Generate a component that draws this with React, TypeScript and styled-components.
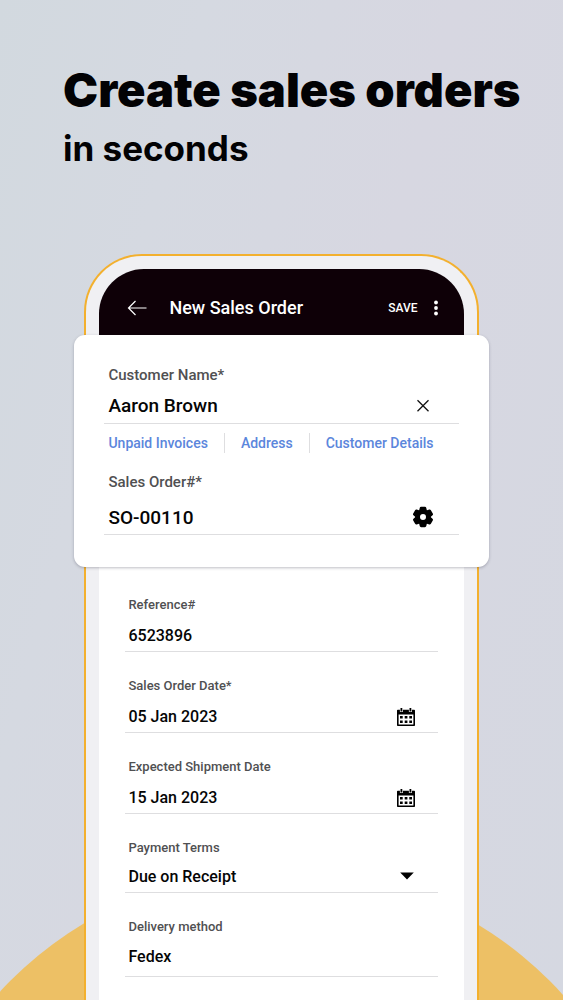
import React from "react";
import styled, { createGlobalStyle } from "styled-components";

const GlobalStyle = createGlobalStyle`
  *, *::before, *::after { box-sizing: border-box; }
  body {
    margin: 0;
    font-family: Roboto, "Liberation Sans", sans-serif;
    color: #050505;
  }
  button, input, select { font: inherit; color: inherit; }
`;

const Page = styled.main`
  position: relative;
  isolation: isolate;
  display: flex;
  flex-direction: column;
  min-height: 100vh;
  overflow: hidden;
  background: linear-gradient(105deg, #d2d9df 0%, #d5d9e1 25%, #d7d7e1 55%, #d5d8e1 100%);
`;

const Sun = styled.div`
  position: absolute;
  z-index: -1;
  top: 869px;
  left: 50%;
  width: 762px;
  height: 762px;
  margin-left: -383px;
  border-radius: 50%;
  background: #edc065;
`;

const Hero = styled.header`
  padding: 62px 0 0 63px;
  font-family: Inter, "Liberation Sans", sans-serif;
  color: #020204;
  white-space: nowrap;
`;

const Title = styled.h1`
  margin: 0;
  font-size: 47px;
  line-height: 56px;
  font-weight: 900;
`;

const Subtitle = styled.p`
  margin: 0;
  padding-top: 6px;
  font-size: 35px;
  line-height: 48px;
  font-weight: 700;
`;

const Phone = styled.section`
  flex: 1;
  display: flex;
  flex-direction: column;
  margin: 82px 15% 0;
  padding: 13px 13px 0;
  border: 2px solid #f3b02e;
  border-bottom: 0;
  border-radius: 58px 58px 0 0;
  background: #f0f0f3;
`;

const AppBar = styled.header`
  display: flex;
  align-items: center;
  height: 66px;
  padding: 12px 25px 0 28px;
  border-radius: 45px 45px 0 0;
  background: #0e0007;
  color: #fff;
`;

const AppTitle = styled.h2`
  flex: 1;
  margin: 0 0 0 22px;
  font-size: 18px;
  line-height: 24px;
  font-weight: 500;
  white-space: nowrap;
`;

const IconButton = styled.button`
  display: flex;
  flex: none;
  padding: 0;
  border: 0;
  background: none;
  cursor: pointer;
`;

const SaveButton = styled(IconButton)`
  margin-right: 15px;
  font-size: 12px;
  line-height: 16px;
  font-weight: 500;
`;

const Card = styled.section`
  position: relative;
  margin: 0 -25px;
  padding: 30px 30px 32px;
  border-radius: 11px;
  background: #fff;
  box-shadow: 0 1px 3px rgba(40, 40, 60, 0.3);
`;

const Screen = styled.section`
  flex: 1;
  display: flex;
  flex-direction: column;
  gap: 26px;
  padding: 30px 26px 23px;
  background: #fff;
`;

const FieldBox = styled.div`
  display: flex;
  flex-direction: column;
`;

const Label = styled.label<{ $large?: boolean }>`
  padding-left: ${(p) => (p.$large ? 4 : 3)}px;
  font-size: ${(p) => (p.$large ? 15 : 13)}px;
  line-height: ${(p) => (p.$large ? 20 : 16)}px;
  font-weight: 500;
  color: #505052;
`;

const Control = styled.div<{ $gap: number; $height: number; $large?: boolean }>`
  display: flex;
  align-items: center;
  margin-top: ${(p) => p.$gap}px;
  padding: 0 ${(p) => (p.$large ? 26 : 23)}px 0 ${(p) => (p.$large ? 4 : 3)}px;
  border-bottom: 1px solid #dedee0;
  font-size: ${(p) => (p.$large ? 19 : 16)}px;
  font-weight: 500;

  input, select {
    flex: 1;
    min-width: 0;
    width: 100%;
    height: ${(p) => p.$height}px;
    padding: 0;
    border: 0;
    outline: 0;
    background: transparent;
    appearance: none;
    font-weight: 500;
  }
`;

const Links = styled.nav`
  display: flex;
  align-items: center;
  margin: 9px 0 19px 4px;
  font-size: 14px;
  line-height: 20px;
  font-weight: 500;
  white-space: nowrap;
`;

const LinkItem = styled.a`
  color: #5b86dc;
  text-decoration: none;

  & + & {
    margin-left: 16px;
    padding-left: 16px;
    border-left: 1px solid #dedee0;
  }
`;

const BackIcon = () => (
  <svg width="20" height="16" viewBox="0 0 20 16" fill="none" stroke="#fff" strokeWidth="1.2" aria-hidden="true">
    <path d="M19.5 8H1.5M8.5 1L1.5 8l7 7" />
  </svg>
);

const MoreIcon = () => (
  <svg width="6" height="16" viewBox="0 0 6 16" fill="#fff" aria-hidden="true">
    <circle cx="3" cy="2.5" r="1.9" />
    <circle cx="3" cy="8" r="1.9" />
    <circle cx="3" cy="13.5" r="1.9" />
  </svg>
);

const ClearIcon = () => (
  <svg width="20" height="20" viewBox="0 0 20 20" fill="none" stroke="#111" strokeWidth="1.3" aria-hidden="true">
    <path d="M4.5 5.2l11 11M15.5 5.2l-11 11" />
  </svg>
);

const GearIcon = () => (
  <svg width="20" height="22" viewBox="-10 -11 20 22" aria-hidden="true">
    <path fillRule="evenodd" d="M-7.8 0a7.8 7.8 0 1 0 15.6 0a7.8 7.8 0 1 0 -15.6 0zM-3 0a3 3 0 1 1 6 0a3 3 0 1 1 -6 0z" />
    {[0, 60, 120, 180, 240, 300].map((a) => (
      <path key={a} transform={`rotate(${a})`} d="M-3.9 -6.2L-3.3 -9.1Q-3 -10.2 -1.9 -10.2H1.9Q3 -10.2 3.3 -9.1L3.9 -6.2z" />
    ))}
  </svg>
);

const CalendarIcon = () => (
  <svg width="18" height="20" viewBox="0 0 18 20" aria-hidden="true">
    <path
      fillRule="evenodd"
      d="M0.8 2.8H17.2Q18 2.8 18 3.6V18.2Q18 19 17.2 19H0.8Q0 19 0 18.2V3.6Q0 2.8 0.8 2.8zM1.6 7.6V17.4H16.4V7.6z"
    />
    <path d="M4.4 1v4M13.4 1v4" stroke="#fff" strokeWidth="3" />
    <path d="M4.4 1v3.4M13.4 1v3.4" stroke="#000" strokeWidth="1.8" />
    <path d="M3 9h2.7v2.6H3zM7.7 9h2.7v2.6H7.7zM12.3 9H15v2.6h-2.7zM3 13.4h2.7V16H3zM7.7 13.4h2.7V16H7.7zM12.3 13.4H15V16h-2.7z" />
  </svg>
);

const CaretIcon = () => (
  <svg width="16" height="8" viewBox="0 0 16 8" aria-hidden="true">
    <path d="M1.2 0.6H14.8L8 7.6z" />
  </svg>
);

interface FieldProps {
  id: string;
  label: string;
  value: string;
  large?: boolean;
  gap?: number;
  height?: number;
  options?: string[];
  children?: React.ReactNode;
}

function Field({ id, label, value, large, gap = 7, height = 31, options, children }: FieldProps) {
  return (
    <FieldBox>
      <Label htmlFor={id} $large={large}>{label}</Label>
      <Control $gap={gap} $height={height} $large={large}>
        {options ? (
          <select id={id} defaultValue={value}>
            {options.map((o) => <option key={o}>{o}</option>)}
          </select>
        ) : (
          <input id={id} type="text" defaultValue={value} />
        )}
        {children}
      </Control>
    </FieldBox>
  );
}

export default function App() {
  return (
    <>
      <GlobalStyle />
      <Page>
        <Sun />
        <Hero>
          <Title>Create sales orders</Title>
          <Subtitle>in seconds</Subtitle>
        </Hero>
        <Phone>
          <AppBar>
            <IconButton type="button" aria-label="Back"><BackIcon /></IconButton>
            <AppTitle>New Sales Order</AppTitle>
            <SaveButton type="button">SAVE</SaveButton>
            <IconButton type="button" aria-label="More options"><MoreIcon /></IconButton>
          </AppBar>
          <Card>
            <Field id="customer" label="Customer Name*" value="Aaron Brown" large gap={2} height={36}>
              <IconButton type="button" aria-label="Clear customer"><ClearIcon /></IconButton>
            </Field>
            <Links>
              <LinkItem href="#invoices">Unpaid Invoices</LinkItem>
              <LinkItem href="#address">Address</LinkItem>
              <LinkItem href="#details">Customer Details</LinkItem>
            </Links>
            <Field id="order-number" label="Sales Order#*" value="SO-00110" large gap={8} height={34}>
              <IconButton type="button" aria-label="Numbering settings"><GearIcon /></IconButton>
            </Field>
          </Card>
          <Screen>
            <Field id="reference" label="Reference#" value="6523896" />
            <Field id="order-date" label="Sales Order Date*" value="05 Jan 2023">
              <IconButton type="button" aria-label="Pick order date"><CalendarIcon /></IconButton>
            </Field>
            <Field id="shipment-date" label="Expected Shipment Date" value="15 Jan 2023">
              <IconButton type="button" aria-label="Pick shipment date"><CalendarIcon /></IconButton>
            </Field>
            <Field id="terms" label="Payment Terms" value="Due on Receipt" gap={4} height={32} options={["Due on Receipt"]}>
              <CaretIcon />
            </Field>
            <Field id="delivery" label="Delivery method" value="Fedex" gap={2} height={39} />
          </Screen>
        </Phone>
      </Page>
    </>
  );
}
